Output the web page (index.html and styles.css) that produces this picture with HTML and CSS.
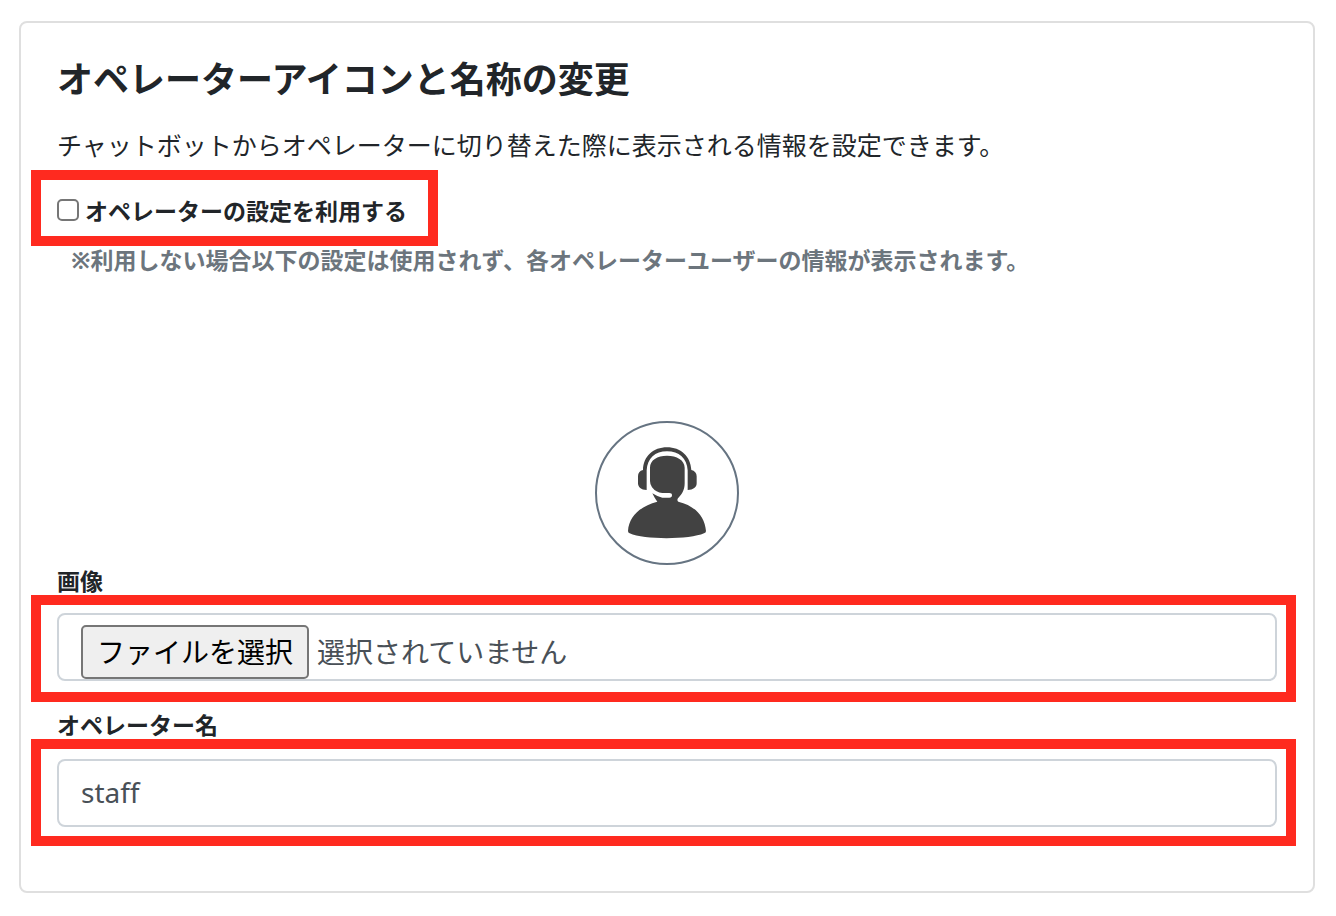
FILE: index.html
```html
<!DOCTYPE html>
<html lang="ja">
<head>
<meta charset="utf-8">
<meta name="viewport" content="width=device-width, initial-scale=1">
<title>オペレーターアイコンと名称の変更</title>
<link rel="stylesheet" href="styles.css">
</head>
<body>
<main class="card">
  <h1 class="title">オペレーターアイコンと名称の変更</h1>
  <p class="lead">チャットボットからオペレーターに切り替えた際に表示される情報を設定できます。</p>
  <div class="frame frame-check">
    <input class="check" type="checkbox" id="use-operator">
    <label class="check-label" for="use-operator">オペレーターの設定を利用する</label>
  </div>
  <p class="note">※利用しない場合以下の設定は使用されず、各オペレーターユーザーの情報が表示されます。</p>
  <div class="avatar">
    <svg class="avatar-icon" viewBox="15 18 432 432" aria-hidden="true">
      <circle cx="231" cy="234" r="213" fill="#fff" stroke="#667482" stroke-width="6"/>
      <g fill="#424242">
        <path d="M159 165C160 124 190 97 231 97S302 124 304 165C314 167 320 174 320 184V205C320 217 310 225 293 225V166C291 130 267 109 231 109S172 130 170 166V225C153 225 144 216 144 205V184C144 174 149 167 159 165Z"/>
        <path d="M180 158C180 135 202 122 231 122S284 135 284 158V205C284 226 275 239 264 250Q260 256 265 260C314 272 344 303 348 348Q348 353 342 355C300 374 163 375 119 355Q114 353 114 348C117 303 151 274 202 260Q194 250 187 235Q202 245 217 248H238Q246 248 246 241T238 234H217Q198 233 186 217Q180 209 180 198Z"/>
      </g>
    </svg>
  </div>
  <label class="label" for="image">画像</label>
  <div class="frame frame-file">
    <div class="control file">
      <span class="file-button" aria-hidden="true">ファイルを選択</span>
      <span class="file-name" aria-hidden="true">選択されていません</span>
      <input class="file-input" type="file" id="image" accept="image/*">
    </div>
  </div>
  <label class="label label-name" for="operator-name">オペレーター名</label>
  <div class="frame frame-text">
    <input class="control text" type="text" id="operator-name" value="staff">
  </div>
</main>
</body>
</html>
```
FILE: styles.css
```css
* {
  box-sizing: border-box;
}

body {
  margin: 21px 21px 23px 19px;
  background: #fff;
  color: #212529;
  font-family: "Noto Sans", "Noto Sans CJK JP", sans-serif;
}

.card {
  display: flex;
  flex-direction: column;
  padding: 35px 17px 45px 10px;
  border: 2px solid #dfdfdf;
  border-radius: 8px;
}

.title {
  margin: 0 26px 24px;
  font-size: 36px;
  line-height: 44px;
  font-weight: 700;
}

.lead {
  margin: 0 26px 6px;
  font-size: 25px;
  line-height: 38px;
}

.frame {
  border: 10px solid #ff2a1f;
}

.frame-check {
  display: flex;
  align-items: center;
  align-self: flex-start;
  gap: 6px;
  padding: 14px 21px 8px 16px;
}

.check {
  appearance: none;
  width: 22px;
  height: 22px;
  margin: 0 0 2px;
  border: 2px solid #767676;
  border-radius: 5px;
  background: #fff;
}

.check:checked {
  background: #0075ff;
}

.check-label {
  font-size: 23px;
  line-height: 34px;
  font-weight: 700;
}

.note {
  margin: 0 40px;
  color: #6c757d;
  font-size: 23px;
  line-height: 28px;
  font-weight: 700;
}

.avatar {
  display: flex;
  justify-content: center;
  padding: 147px 0 0 7px;
}

.avatar-icon {
  width: 144px;
  height: 144px;
}

.label {
  align-self: flex-start;
  padding: 3px 26px 0;
  font-size: 23px;
  line-height: 27px;
  font-weight: 700;
}

.label-name {
  padding-top: 10px;
}

.frame-file {
  padding: 8px 9px 11px 16px;
}

.frame-text {
  padding: 10px 9px 9px 16px;
}

.control {
  width: 100%;
  height: 68px;
  border: 2px solid #ced4da;
  border-radius: 8px;
  background: #fff;
  color: #495057;
  font-size: 28px;
}

.file {
  position: relative;
  display: flex;
  align-items: flex-end;
  gap: 8px;
  padding: 0 22px;
}

.file-button {
  padding: 0 14px;
  border: 2px solid #767676;
  border-radius: 5px;
  background: #efefef;
  color: #000;
  line-height: 50px;
}

.file-name {
  line-height: 54px;
}

.file-input {
  position: absolute;
  inset: 0;
  width: 100%;
  opacity: 0;
}

.text {
  display: block;
  padding: 0 22px 2px;
  font-family: inherit;
}
```
